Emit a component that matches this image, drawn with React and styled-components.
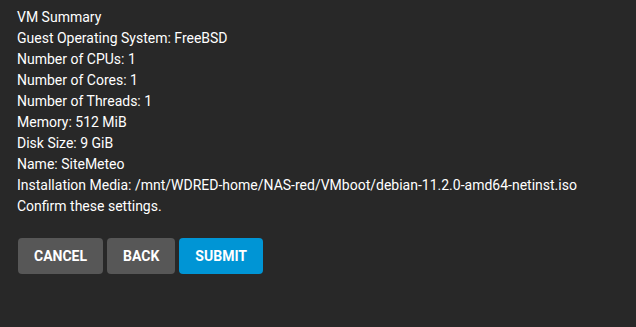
import React from 'react'
import styled, { createGlobalStyle } from 'styled-components'

const Global = createGlobalStyle`
html, body {
  margin: 0;
  background: #282828;
}
body {
  font-family: Roboto, "Liberation Sans", sans-serif;
}
`

const Wrap = styled.div`
padding: 7px 16px 0 17px;
color: #ffffff;
font-size: 14px;
`

const Line = styled.div`
line-height: 21px;
white-space: nowrap;
`

const Actions = styled.div`
display: flex;
gap: 4px;
margin-top: 21px;
padding-left: 1px;
`

const Btn = styled.button`
height: 36px;
min-width: 64px;
padding: 0 16px;
border: none;
border-radius: 4px;
background: ${p => (p.primary ? '#0095d5' : '#575757')};
color: #ffffff;
font-family: Roboto, "Liberation Sans", sans-serif;
font-size: 14px;
font-weight: 700;
text-transform: uppercase;
cursor: pointer;
`

const summary = [
  'VM Summary',
  'Guest Operating System: FreeBSD',
  'Number of CPUs: 1',
  'Number of Cores: 1',
  'Number of Threads: 1',
  'Memory: 512 MiB',
  'Disk Size: 9 GiB',
  'Name: SiteMeteo',
  'Installation Media: /mnt/WDRED-home/NAS-red/VMboot/debian-11.2.0-amd64-netinst.iso',
  'Confirm these settings.',
]

const App = () => {
  return (
    <>
      <Global />
      <Wrap>
        {summary.map((s, i) => (
          <Line key={i}>{s}</Line>
        ))}
        <Actions>
          <Btn>Cancel</Btn>
          <Btn>Back</Btn>
          <Btn primary>Submit</Btn>
        </Actions>
      </Wrap>
    </>
  )
}

export default App
